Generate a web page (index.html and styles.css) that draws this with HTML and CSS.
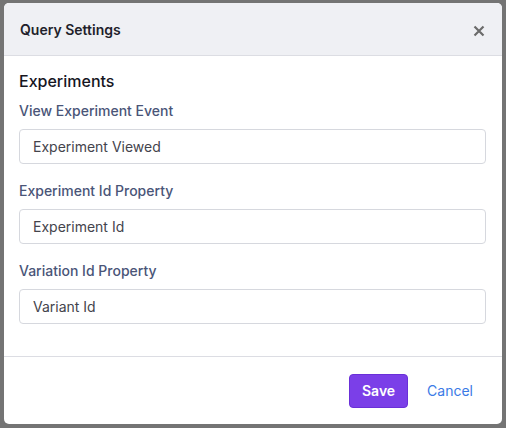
FILE: index.html
```html
<!DOCTYPE html>
<html>
<head>
<meta charset="utf-8">
<link rel="stylesheet" href="styles.css">
</head>
<body>
<div class="modal">
  <div class="modal-header">
    <h5 class="modal-title">Query Settings</h5>
    <button class="close" aria-label="Close">
      <svg width="12" height="12" viewBox="0 0 12 12"><path d="M1.5 1.5 L10.5 10.5 M10.5 1.5 L1.5 10.5" stroke="#6b6b6b" stroke-width="2.2" stroke-linecap="butt"/></svg>
    </button>
  </div>
  <div class="modal-body">
    <h4 class="section">Experiments</h4>
    <div class="field">
      <label class="label">View Experiment Event</label>
      <input class="input" type="text" value="Experiment Viewed">
    </div>
    <div class="field">
      <label class="label">Experiment Id Property</label>
      <input class="input" type="text" value="Experiment Id">
    </div>
    <div class="field">
      <label class="label">Variation Id Property</label>
      <input class="input" type="text" value="Variant Id">
    </div>
  </div>
  <div class="modal-footer">
    <button class="btn btn-primary">Save</button>
    <button class="btn btn-link">Cancel</button>
  </div>
</div>
</body>
</html>
```
FILE: styles.css
```css
* { box-sizing: border-box; }
html, body { margin: 0; padding: 0; }
body {
  background: #747474;
  font-family: Inter, "Noto Sans", sans-serif;
  width: 506px;
  height: 428px;
  overflow: hidden;
  padding: 3px 4px 4px 4px;
}
.modal {
  background: #fff;
  border-radius: 5px;
  height: 421px;
  display: flex;
  flex-direction: column;
  overflow: hidden;
}
.modal-header {
  background: #eff0f4;
  height: 53px;
  border-bottom: 1px solid #dcdde3;
  display: flex;
  align-items: center;
  justify-content: space-between;
  padding: 0 17px 0 16px;
}
.modal-title {
  margin: 0;
  font-size: 14px;
  font-weight: 600;
  color: #1f1f2b;
  letter-spacing: 0;
}
.close {
  background: none;
  border: 0;
  padding: 0;
  width: 12px;
  height: 12px;
  display: flex;
  margin-top: 3px;
}
.modal-body {
  padding: 13px 16px 0 15px;
  flex: 1;
}
.section {
  margin: 0 0 8px 0;
  font-size: 16px;
  font-weight: 500;
  color: #16161f;
  line-height: 24px;
}
.field {
  display: flex;
  flex-direction: column;
  margin-bottom: 17px;
}
.label {
  font-size: 14px;
  font-weight: 500;
  color: #4a5578;
  line-height: 20px;
  margin-bottom: 8px;
}
.input {
  height: 35px;
  border: 1px solid #d6d8de;
  border-radius: 4px;
  padding: 0 13px;
  font-family: Inter, "Noto Sans", sans-serif;
  font-size: 14px;
  color: #44444c;
  background: #fff;
  outline: none;
}
.modal-footer {
  height: 68px;
  border-top: 1px solid #dcdde3;
  display: flex;
  align-items: center;
  justify-content: flex-end;
  padding: 0 16px 0 0;
  gap: 6px;
}
.btn {
  font-family: Inter, "Noto Sans", sans-serif;
  font-size: 14px;
  border-radius: 4px;
  height: 34px;
  border: 1px solid transparent;
  cursor: pointer;
}
.btn-primary {
  background: #7b3fe8;
  border-color: #6a30d8;
  color: #fff;
  font-weight: 600;
  width: 59px;
  padding: 0;
}
.btn-link {
  background: none;
  color: #3b7ae6;
  padding: 0 12px;
  font-weight: 400;
}
```
